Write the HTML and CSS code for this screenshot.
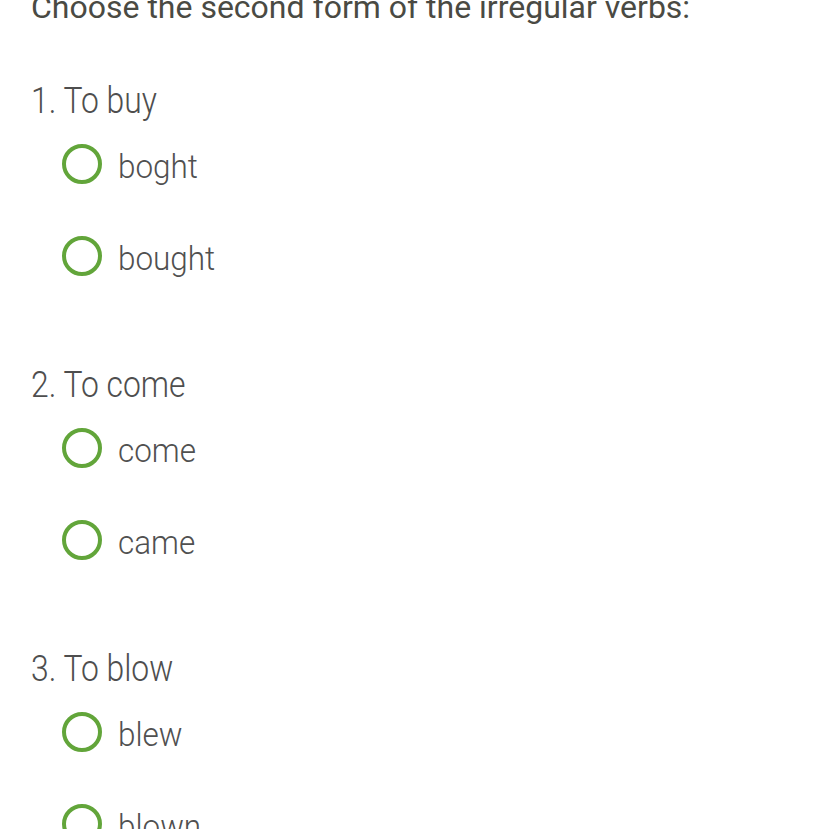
FILE: index.html
```html
<!DOCTYPE html>
<html>
<head>
<meta charset="utf-8">
<link rel="stylesheet" href="styles.css">
</head>
<body>
<div class="page">
  <h1 class="title">Choose the second form of the irregular verbs:</h1>
  <div class="question">
    <div class="q-label"><span class="narrow-q">1. To buy</span></div>
    <label class="option"><span class="radio"></span><span class="opt-text">boght</span></label>
    <label class="option"><span class="radio"></span><span class="opt-text">bought</span></label>
  </div>
  <div class="question">
    <div class="q-label"><span class="narrow-q">2. To come</span></div>
    <label class="option"><span class="radio"></span><span class="opt-text">come</span></label>
    <label class="option"><span class="radio"></span><span class="opt-text">came</span></label>
  </div>
  <div class="question">
    <div class="q-label"><span class="narrow-q">3. To blow</span></div>
    <label class="option"><span class="radio"></span><span class="opt-text">blew</span></label>
    <label class="option"><span class="radio"></span><span class="opt-text">blown</span></label>
  </div>
</div>
</body>
</html>
```
FILE: styles.css
```css
html, body {
  margin: 0;
  padding: 0;
  background: #ffffff;
  overflow: hidden;
}
.page {
  padding-left: 31px;
  font-family: Roboto, "Liberation Sans", sans-serif;
}
.title {
  margin: -13px 0 0 0;
  font-size: 32px;
  line-height: 40px;
  font-weight: 400;
  color: #4a4a43;
}
.question {
  margin-top: 49px;
}
.question + .question {
  margin-top: 56px;
}
.q-label {
  font-size: 36px;
  line-height: 50px;
  font-weight: 300;
  color: #4e4e4e;
  margin-bottom: -6px;
}
.narrow-q {
  display: inline-block;
  transform: scaleX(0.885);
  transform-origin: left center;
}
.option {
  display: flex;
  align-items: center;
  height: 92px;
  padding-left: 31px;
}
.radio {
  width: 40px;
  height: 40px;
  box-sizing: border-box;
  border: 4px solid #62a53a;
  border-radius: 50%;
  margin-bottom: 5px;
  flex: none;
}
.opt-text {
  display: inline-block;
  margin-left: 16px;
  font-size: 34px;
  line-height: 92px;
  font-weight: 300;
  color: #505050;
  transform: scaleX(0.925);
  transform-origin: left center;
}
```
